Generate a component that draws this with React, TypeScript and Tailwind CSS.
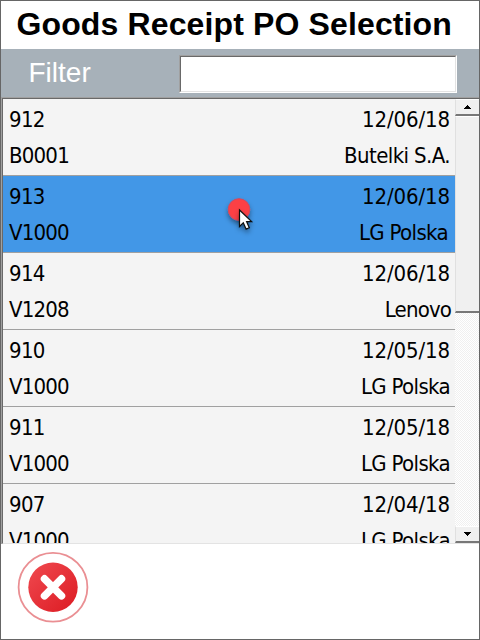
type Order = { id: string; date: string; code: string; name: string; nameClass: string };

const orders: Order[] = [
  { id: '912', date: '12/06/18', code: 'B0001', name: 'Butelki S.A.', nameClass: 'tracking-[-0.6px]' },
  { id: '913', date: '12/06/18', code: 'V1000', name: 'LG Polska', nameClass: 'tracking-[-0.65px] mr-[2px]' },
  { id: '914', date: '12/06/18', code: 'V1208', name: 'Lenovo', nameClass: 'tracking-[-0.85px] -mr-px' },
  { id: '910', date: '12/05/18', code: 'V1000', name: 'LG Polska', nameClass: 'tracking-[-0.65px]' },
  { id: '911', date: '12/05/18', code: 'V1000', name: 'LG Polska', nameClass: 'tracking-[-0.65px]' },
  { id: '907', date: '12/04/18', code: 'V1000', name: 'LG Polska', nameClass: 'tracking-[-0.65px]' },
];

function OrderRow({ order, selected }: { order: Order; selected: boolean }) {
  return (
    <div
      className={`h-[77px] shrink-0 border-b border-[#a0a0a0] pl-[6px] pr-[5px] pt-[2px] ${selected ? 'bg-[#4297e7]' : 'bg-[#f4f4f4]'}`}
    >
      <div className="flex h-9 items-center justify-between">
        <span className="tracking-[-0.7px]">{order.id}</span>
        <span className="tracking-[-0.1px]">{order.date}</span>
      </div>
      <div className="flex h-9 items-center justify-between">
        <span className="tracking-[-0.8px]">{order.code}</span>
        <span className={order.nameClass}>{order.name}</span>
      </div>
    </div>
  );
}

function ScrollButton({ down = false }: { down?: boolean }) {
  return (
    <div className="flex h-[17px] shrink-0 items-center justify-center border-b-2 border-l border-t border-b-[#777] border-l-[#e0e0e0] border-t-white bg-[#f0f0f0]">
      <svg width="7" height="4" viewBox="0 0 7 4" shapeRendering="crispEdges">
        <path d={down ? 'M0 0h7v1h-1v1h-1v1h-1v1h-1v-1h-1v-1h-1v-1h-1z' : 'M3 0h1v1h1v1h1v1h1v1h-7v-1h1v-1h1v-1h1z'} />
      </svg>
    </div>
  );
}

export default function App() {
  return (
    <div className="relative flex h-[640px] w-[480px] flex-col overflow-hidden border border-[#666] bg-white font-['Liberation_Sans',Arial,sans-serif]">
      <h1 className="h-12 shrink-0 whitespace-nowrap pl-[15.5px] text-[32px] font-bold leading-[46px] tracking-[0.13px] text-black">
        Goods Receipt PO Selection
      </h1>
      <div className="flex h-12 shrink-0 items-start bg-[#a7b1b9] pt-[6px]">
        <label htmlFor="filter" className="w-[178px] pl-[27.5px] text-[28px] leading-[35px] text-white">
          Filter
        </label>
        <div className="h-[38px] w-[278px] border border-b-white border-l-[#a0a0a0] border-r-white border-t-[#a0a0a0]">
          <input
            id="filter"
            className="block h-full w-full border border-b-[#e3e3e3] border-l-[#696969] border-r-[#e3e3e3] border-t-[#696969] bg-white outline-none"
          />
        </div>
      </div>
      <div className="h-[447px] shrink-0 border-l border-t border-[#a0a0a0]">
        <div className="flex h-full overflow-hidden border-b border-l border-t border-b-[#e3e3e3] border-l-[#696969] border-t-[#696969]">
          <div className="flex w-[452px] flex-col overflow-hidden text-[22px] text-black font-['DejaVu_Sans_Condensed','DejaVu_Sans',sans-serif]">
            {orders.map((order) => (
              <OrderRow key={order.id} order={order} selected={order.id === '913'} />
            ))}
          </div>
          <div className="flex flex-1 flex-col bg-[repeating-conic-gradient(#fff_0_25%,#f0f0f0_0_50%)] bg-[length:2px_2px]">
            <ScrollButton />
            <div className="h-[197px] border-b-2 border-l border-t border-b-[#777] border-l-[#e0e0e0] border-t-white bg-[#f0f0f0]" />
            <div className="flex-1" />
            <ScrollButton down />
          </div>
        </div>
      </div>
      <div className="flex-1 pl-4 pt-2">
        <svg width="72" height="72" viewBox="0 0 72 72">
          <defs>
            <linearGradient id="close" x1="0" y1="0" x2="1" y2="1">
              <stop offset="0" stopColor="#f04a50" />
              <stop offset="1" stopColor="#dc1a22" />
            </linearGradient>
          </defs>
          <circle cx="36" cy="35.3" r="34.4" fill="#fff" stroke="#ea8f93" strokeWidth="1.8" />
          <circle cx="36" cy="35.3" r="24.7" fill="url(#close)" />
          <path d="M27.5 26.8l17 17M44.5 26.8l-17 17" stroke="#fff" strokeWidth="7.5" strokeLinecap="round" />
        </svg>
      </div>
      <svg className="absolute left-[219px] top-[189px]" width="42" height="50" viewBox="220 190 42 50">
        <defs>
          <filter id="shadow" x="-50%" y="-50%" width="200%" height="200%">
            <feDropShadow dx="0" dy="3" stdDeviation="2.5" floodColor="#000" floodOpacity="0.4" />
          </filter>
        </defs>
        <circle cx="239" cy="209.5" r="10.8" fill="#fc4144" stroke="#cf4a60" strokeWidth="1" filter="url(#shadow)" />
        <path
          d="M239.5 210v16.5l3.8-3.7 2.8 6.3 3.2-1.4-2.7-6.1h5z"
          fill="#fff"
          stroke="#111"
          strokeWidth="1.2"
          filter="url(#shadow)"
        />
      </svg>
    </div>
  );
}
